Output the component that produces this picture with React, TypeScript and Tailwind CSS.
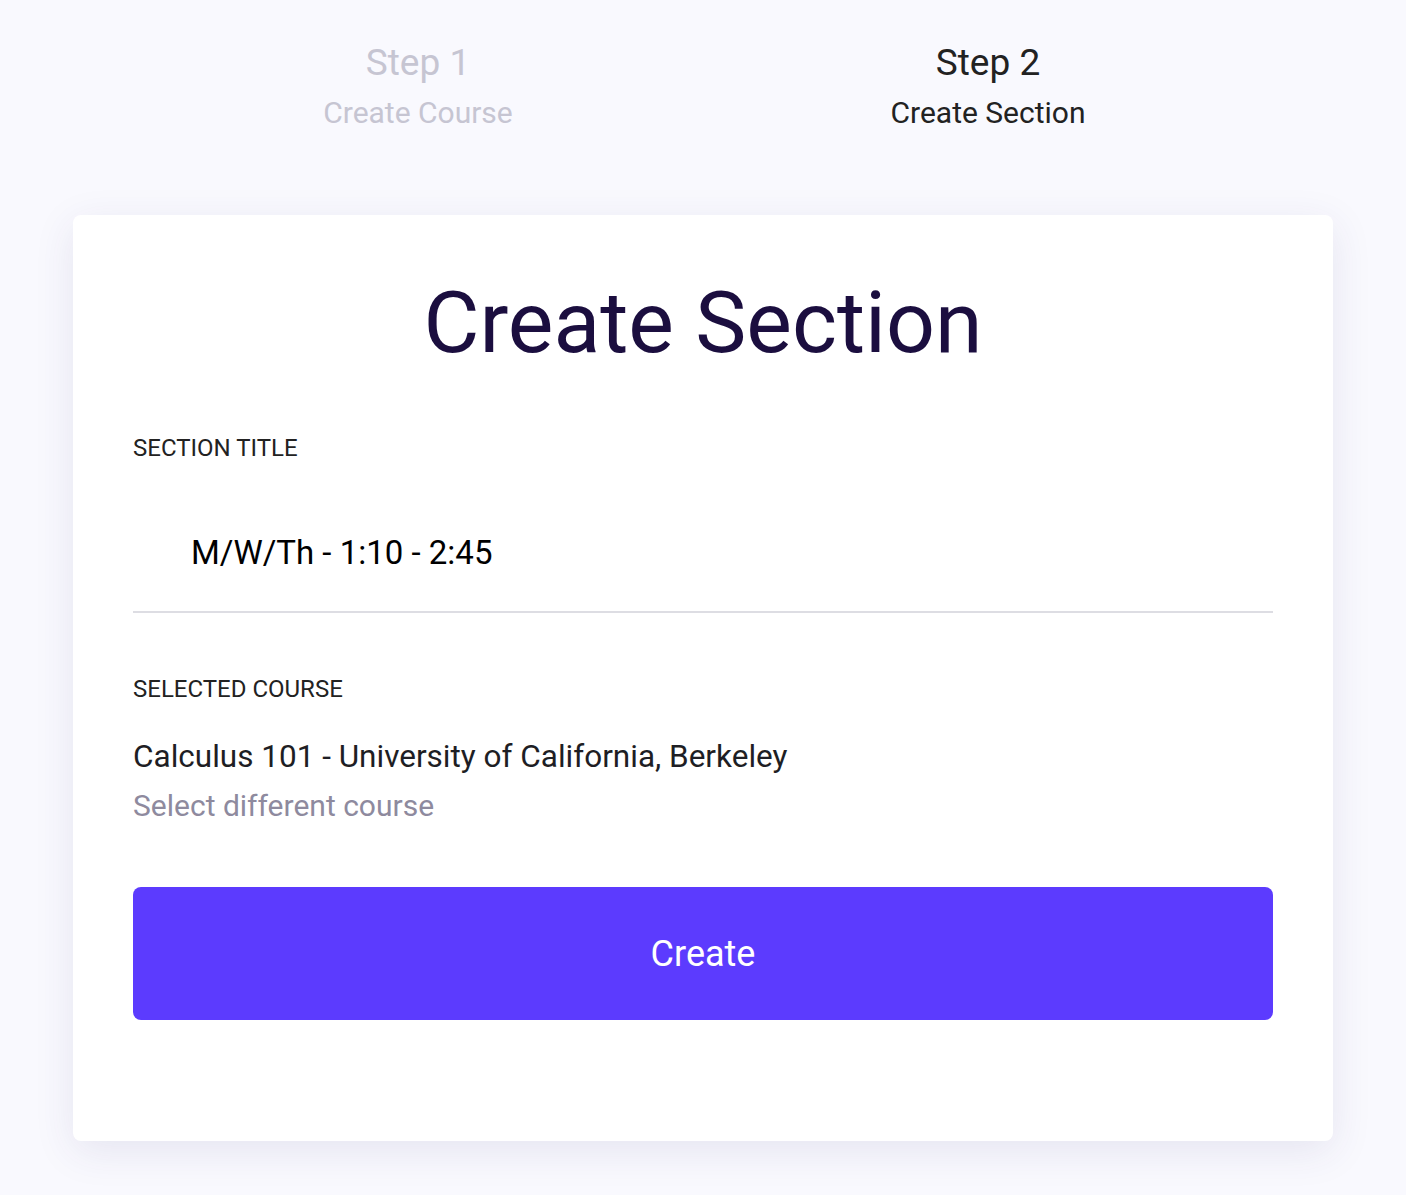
import React, { useState } from 'react';

const steps = [
  { label: 'Step 1', sub: 'Create Course', active: false },
  { label: 'Step 2', sub: 'Create Section', active: true },
];

export default function App() {
  const [title, setTitle] = useState('M/W/Th - 1:10 - 2:45');

  return (
    <div className="min-h-[1195px] bg-[#f9f9fe] pt-[40px] font-['Roboto',sans-serif]">
      {/* Stepper */}
      <div className="mx-auto grid w-[1140px] grid-cols-2">
        {steps.map((s) => (
          <div
            key={s.label}
            className={`flex flex-col items-center ${s.active ? 'text-[#222222]' : 'text-[#c6c5d2]'}`}
          >
            <div className="text-[37px] leading-[46px]">{s.label}</div>
            <div className="mt-[9px] text-[30px] leading-[36px]">{s.sub}</div>
          </div>
        ))}
      </div>

      {/* Card */}
      <div className="mx-auto mt-[84px] w-[1260px] rounded-lg bg-white px-[60px] pt-[58px] pb-[121px] shadow-[0_10px_40px_rgba(60,50,120,0.10)]">
        <h1 className="text-center text-[86px] leading-[100px] text-[#1b0e3f]">Create Section</h1>

        <label className="mt-[60px] block text-[24px] leading-[30px] text-[#222222]">SECTION TITLE</label>
        <input
          value={title}
          onChange={(e) => setTitle(e.target.value)}
          className="mt-[70px] block w-full border-b-2 border-[#dddde3] bg-transparent pb-[38px] pl-[58px] text-[33px] leading-[40px] text-black outline-none"
        />

        <div className="mt-[61px] text-[24px] leading-[30px] text-[#222222]">SELECTED COURSE</div>
        <div className="mt-[33px] text-[31.5px] leading-[40px] text-[#1e1e24]">
          Calculus 101 - University of California, Berkeley
        </div>
        <button className="mt-[10px] block text-[30px] leading-[38px] text-[#8e8a9e]">Select different course</button>

        <button className="mt-[62px] flex h-[133px] w-full items-center justify-center rounded-lg bg-[#5c3bfe] text-[36px] text-white">
          Create
        </button>
      </div>
    </div>
  );
}
